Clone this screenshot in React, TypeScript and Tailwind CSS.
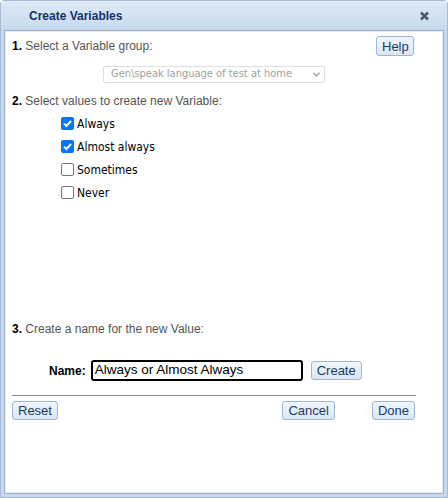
import React from 'react';

const Btn: React.FC<{ children: React.ReactNode; className?: string }> = ({ children, className = '' }) => (
    <button
        className={`h-[19px] px-[5px] rounded-[3px] border border-[#9fb6d3] bg-gradient-to-b from-[#f1f6fc] to-[#dbe7f5] text-[13px] leading-none text-[#1b3a68] font-['Liberation_Sans',sans-serif] ${className}`}
    >
        {children}
    </button>
);

const Check: React.FC<{ checked: boolean; label: string }> = ({ checked, label }) => (
    <label className="flex items-center h-[23px] gap-[3px]">
        {checked ? (
            <span className="w-[13px] h-[13px] rounded-[2px] bg-[#0075ff] flex items-center justify-center">
                <svg width="11" height="11" viewBox="0 0 11 11">
                    <path d="M2 5.6 L4.4 8 L9 3" fill="none" stroke="#fff" strokeWidth="2" />
                </svg>
            </span>
        ) : (
            <span className="w-[13px] h-[13px] rounded-[2px] border border-[#767676] bg-white" />
        )}
        <span className="text-[12px] text-black font-['DejaVu_Sans_Condensed','DejaVu_Sans',sans-serif]">{label}</span>
    </label>
);

export default function App() {
    return (
        <div className="w-[448px] h-[498px] bg-[#c6d9f0] border border-[#a9bcd6] rounded-t-[4px] flex flex-col font-['Liberation_Sans',Arial,sans-serif]">
            <div className="h-[29px] shrink-0 flex items-center justify-between bg-gradient-to-b from-[#e0eaf6] to-[#c6d9f0] pl-[28px] pr-[17px]">
                <span className="text-[12px] font-bold text-[#15316b]">Create Variables</span>
                <svg width="11" height="10" viewBox="0 0 11 10">
                    <path d="M2 1.5 L9 8.5 M9 1.5 L2 8.5" stroke="#4e5a6c" strokeWidth="2.6" />
                </svg>
            </div>
            <div className="flex-1 mx-[3px] mb-[3px] bg-white border border-[#9eacc2] shadow-[inset_0_0_0_1px_#e8eef6] px-[7px] pt-[5px] flex flex-col">
                <div className="flex justify-between items-start">
                    <p className="text-[12px] text-[#555] mt-[1px]">
                        <span className="font-bold text-black">1.</span> Select a Variable group:
                    </p>
                    <Btn className="mr-[22px] h-[20px] w-[38px] px-0">Help</Btn>
                </div>
                <div className="flex justify-center mt-[10px] pr-[20px]">
                    <div className="w-[222px] h-[17px] border border-[#dedede] rounded-[2px] flex items-center justify-between pl-[7px] pr-[3px] bg-white">
                        <span className="text-[11px] text-[#a0a0a0] font-['DejaVu_Sans_Condensed','DejaVu_Sans',sans-serif] whitespace-nowrap">Gen\speak language of test at home</span>
                        <svg width="9" height="9" viewBox="0 0 10 10">
                            <path d="M1.5 3 L5 6.5 L8.5 3" fill="none" stroke="#a8a8a8" strokeWidth="1.8" />
                        </svg>
                    </div>
                </div>
                <p className="text-[12px] text-[#555] mt-[9px]">
                    <span className="font-bold text-black">2.</span> Select values to create new Variable:
                </p>
                <div className="flex flex-col pl-[49px] mt-[2px]">
                    <Check checked label="Always" />
                    <Check checked label="Almost always" />
                    <Check checked={false} label="Sometimes" />
                    <Check checked={false} label="Never" />
                </div>
                <p className="text-[12px] text-[#555] mt-[116px]">
                    <span className="font-bold text-black">3.</span> Create a name for the new Value:
                </p>
                <div className="flex items-center mt-[22px] pl-[37px]">
                    <span className="text-[12px] font-bold text-black mr-[5px]">Name:</span>
                    <div className="w-[212px] h-[21px] border-2 border-black rounded-[3px] flex items-center px-[2px] text-[13.5px] text-black">
                        Always or Almost Always
                    </div>
                    <Btn className="ml-[8px]">Create</Btn>
                </div>
                <div className="mt-[14px] mr-[20px] border-t border-[#8a8a8a]" />
                <div className="flex items-center mt-[5px] mr-[21px]">
                    <Btn>Reset</Btn>
                    <div className="flex-1" />
                    <Btn>Cancel</Btn>
                    <Btn className="ml-[37px]">Done</Btn>
                </div>
            </div>
        </div>
    );
}
